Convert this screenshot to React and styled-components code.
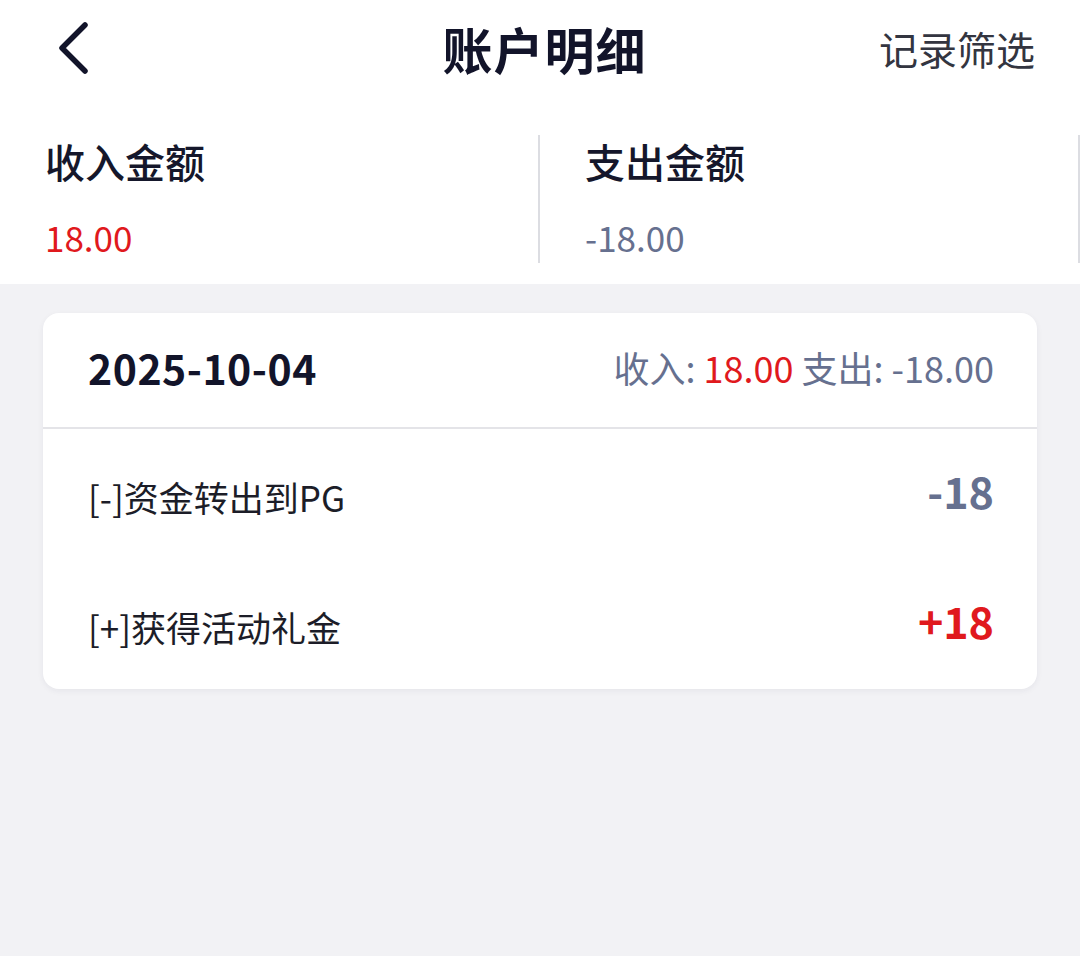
import React from 'react';
import styled, { createGlobalStyle } from 'styled-components';

const GlobalStyle = createGlobalStyle`
html, body {
  margin: 0;
  padding: 0;
  background: #f2f2f5;
  font-family: "Noto Sans CJK SC", "Noto Sans", sans-serif;
}
`;

const RED = '#e0191d';
const SLATE = '#66708f';

const Page = styled.div`
width: 1080px;
min-height: 956px;
background: #f2f2f5;
`;

const Header = styled.header`
display: grid;
grid-template-columns: 1fr auto 1fr;
align-items: center;
height: 95px;
padding: 0 45px 0 54px;
background: #ffffff;
`;

const BackButton = styled.button`
justify-self: start;
display: flex;
align-items: center;
padding: 0;
border: none;
background: none;
cursor: pointer;
`;

const Title = styled.h1`
margin: 0;
font-size: 50px;
font-weight: 700;
color: #12142a;
letter-spacing: 1px;
`;

const Filter = styled.span`
justify-self: end;
font-size: 39px;
color: #333540;
`;

const Summary = styled.section`
display: grid;
grid-template-columns: 1fr 1fr;
padding: 40px 0 21px;
background: #ffffff;
`;

const SummaryCell = styled.div`
display: flex;
flex-direction: column;
gap: 24px;
padding: 0 45px;
border-right: 2px solid #dcdde2;
`;

const SummaryLabel = styled.span`
font-size: 40px;
font-weight: 500;
color: #15172b;
line-height: 52px;
`;

const SummaryValue = styled.span`
font-size: 35px;
color: ${p => p.$color};
line-height: 52px;
`;

const Card = styled.div`
margin: 29px 43px 0;
background: #ffffff;
border-radius: 16px;
box-shadow: 0 2px 6px rgba(30, 35, 60, 0.06);
overflow: hidden;
`;

const CardHead = styled.div`
display: flex;
justify-content: space-between;
align-items: center;
height: 114px;
padding: 0 43px 0 45px;
border-bottom: 2px solid #e4e4e8;
`;

const DateText = styled.span`
font-size: 41px;
font-weight: 700;
color: #12142a;
letter-spacing: 0.5px;
margin-top: -6px;
`;

const Totals = styled.span`
font-size: 36px;
color: ${SLATE};
margin-top: -6px;
`;

const Red = styled.span`
color: ${RED};
`;

const Row = styled.div`
display: flex;
justify-content: space-between;
align-items: center;
height: 130px;
padding: 0 43px 0 45px;
`;

const RowLabel = styled.span`
font-size: 35px;
color: #1c1d28;
margin-top: 4px;
`;

const RowAmount = styled.span`
font-size: 43px;
font-weight: 700;
color: ${p => p.$color};
margin-top: -8px;
`;

const ChevronLeft = () => (
  <svg width="40" height="56" viewBox="0 0 40 56" fill="none">
    <path d="M31 5 L8 28 L31 51" stroke="#12142a" strokeWidth="5.5" strokeLinecap="round" strokeLinejoin="round" />
  </svg>
);

const records = [
  { label: '[-]资金转出到PG', amount: '-18', color: SLATE },
  { label: '[+]获得活动礼金', amount: '+18', color: RED },
];

export default function App() {
  return (
    <Page>
      <GlobalStyle />
      <Header>
        <BackButton aria-label="返回">
          <ChevronLeft />
        </BackButton>
        <Title>账户明细</Title>
        <Filter>记录筛选</Filter>
      </Header>
      <Summary>
        <SummaryCell>
          <SummaryLabel>收入金额</SummaryLabel>
          <SummaryValue $color={RED}>18.00</SummaryValue>
        </SummaryCell>
        <SummaryCell>
          <SummaryLabel>支出金额</SummaryLabel>
          <SummaryValue $color={SLATE}>-18.00</SummaryValue>
        </SummaryCell>
      </Summary>
      <Card>
        <CardHead>
          <DateText>2025-10-04</DateText>
          <Totals>
            收入: <Red>18.00</Red> 支出: -18.00
          </Totals>
        </CardHead>
        {records.map((r, i) => (
          <Row key={i}>
            <RowLabel>{r.label}</RowLabel>
            <RowAmount $color={r.color}>{r.amount}</RowAmount>
          </Row>
        ))}
      </Card>
    </Page>
  );
}
